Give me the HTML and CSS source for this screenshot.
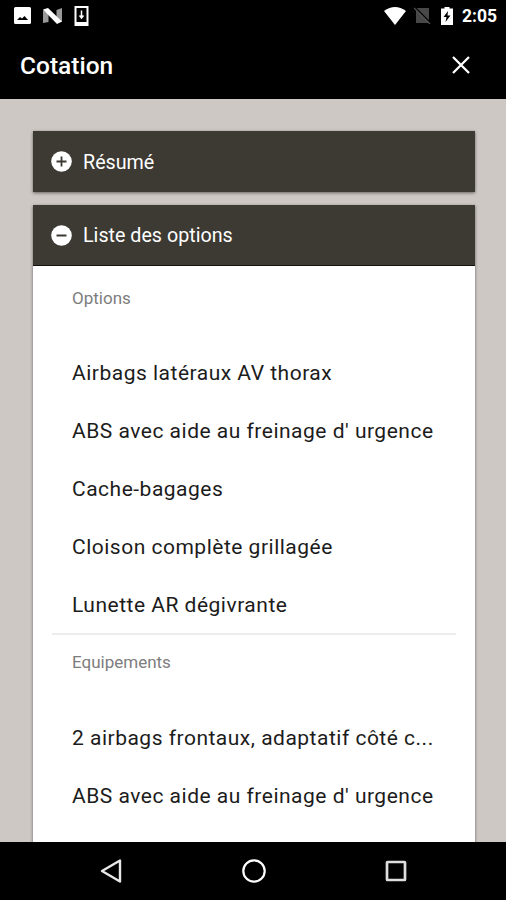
FILE: index.html
```html
<!DOCTYPE html>
<html lang="fr">
<head>
    <meta charset="UTF-8">
    <meta name="viewport" content="width=device-width, initial-scale=1.0">
    <title>Cotation</title>
    <link rel="stylesheet" href="styles.css">
</head>
<body>
    <div class="status-bar">
        <div class="status-left">
            <svg width="17" height="17" viewBox="0 0 17 17">
                <rect width="17" height="17" rx="1.5" fill="#fff"/>
                <path d="M3 13l3-3 2 1.500 2.500-2.500 3.500 4z" fill="#000"/>
            </svg>
            <svg width="19" height="16" viewBox="0 0 19 16">
                <path d="M0 2l5.500 3v9L0 15zM19 0v14l-5.500-3V2z" fill="#999"/>
                <path d="M0 1.500L5 0l14 13.500L14 16z" fill="#fff"/>
            </svg>
            <svg width="15" height="20" viewBox="0 0 15 20">
                <path d="M1.500 1h12v18h-12z" fill="none" stroke="#fff" stroke-width="2"/>
                <path d="M1 17.500h13" stroke="#fff" stroke-width="3"/>
                <path d="M7.500 4.500v7M5.500 9.500l2 2.500 2-2.500" fill="none" stroke="#fff" stroke-width="1.500"/>
            </svg>
        </div>
        <div class="status-right">
            <svg class="wifi" width="22" height="18" viewBox="0 0 22 18">
                <path d="M0 4Q11-4 22 4L11 18z" fill="#fff"/>
            </svg>
            <svg class="signal" width="17" height="17" viewBox="0 0 17 17">
                <path d="M2 1h13v15H2z" fill="#484848"/>
                <path d="M1 .5L17 16.500" stroke="#000" stroke-width="1.600"/>
                <path d="M0 1L16 17" stroke="#555" stroke-width="1.200"/>
            </svg>
            <svg class="battery" width="12" height="18" viewBox="0 0 12 18">
                <path d="M0 1.500h3.500V0h5v1.500H12V18H0z" fill="#fff"/>
                <path d="M7 4L2.500 10H5.500L4.500 15 9.500 8.500H6.500z" fill="#000"/>
            </svg>
            <span class="clock">2:05</span>
        </div>
    </div>

    <header>
        <h1>Cotation</h1>
        <svg class="close" width="18" height="18" viewBox="0 0 18 18">
            <path d="M1 1l16 16M17 1L1 17" stroke="#fff" stroke-width="2.300"/>
        </svg>
    </header>

    <main>
        <div class="card">
            <div class="card-header">
                <svg width="21" height="21" viewBox="0 0 21 21">
                    <circle cx="10.500" cy="10.500" r="10.300" fill="#fff"/>
                    <path d="M5.500 10.500h10M10.500 5.500v10" stroke="#3d3933" stroke-width="1.800"/>
                </svg>
                <span>Résumé</span>
            </div>
        </div>

        <div class="card open">
            <div class="card-header">
                <svg width="21" height="21" viewBox="0 0 21 21">
                    <circle cx="10.500" cy="10.500" r="10.300" fill="#fff"/>
                    <path d="M5.500 10.500h10" stroke="#3d3933" stroke-width="2"/>
                </svg>
                <span>Liste des options</span>
            </div>
            <div class="card-body">
                <h3>Options</h3>
                <ul>
                    <li>Airbags latéraux AV thorax</li>
                    <li>ABS avec aide au freinage d' urgence</li>
                    <li>Cache-bagages</li>
                    <li>Cloison complète grillagée</li>
                    <li>Lunette AR dégivrante</li>
                </ul>
                <h3 class="divided">Equipements</h3>
                <ul>
                    <li>2 airbags frontaux, adaptatif côté c...</li>
                    <li>ABS avec aide au freinage d' urgence</li>
                </ul>
            </div>
        </div>
    </main>

    <nav>
        <svg width="24" height="26" viewBox="0 0 24 26">
            <path d="M21 2.500v21L3 13z" fill="none" stroke="#e8e8e8" stroke-width="2.400" stroke-linejoin="round"/>
        </svg>
        <svg width="24" height="24" viewBox="0 0 24 24">
            <circle cx="12" cy="12" r="10.700" fill="none" stroke="#fff" stroke-width="2.200"/>
        </svg>
        <svg width="22" height="22" viewBox="0 0 22 22">
            <rect x="2" y="2" width="18" height="18" rx=".5" fill="none" stroke="#ddd" stroke-width="2.700"/>
        </svg>
    </nav>
</body>
</html>
```
FILE: styles.css
```css
* {
    box-sizing: border-box;
}

body {
    margin: 0;
    height: 900px;
    display: flex;
    flex-direction: column;
    overflow: hidden;
    background-color: #cec8c4;
    font-family: Roboto, sans-serif;
}

.status-bar {
    display: flex;
    justify-content: space-between;
    flex: none;
    height: 31px;
    padding: 0 9px 0 14px;
    background-color: #000;
}

.status-left,
.status-right {
    display: flex;
    align-items: center;
}

.status-left {
    gap: 12px;
}

.wifi {
    margin-right: 8px;
}

.signal {
    margin-right: 10px;
}

.battery {
    margin-right: 9px;
}

.clock {
    color: #fff;
    font-size: 17.5px;
    font-weight: 700;
}

header {
    display: flex;
    flex: none;
    justify-content: space-between;
    align-items: center;
    height: 68px;
    padding: 0 36px 0 20px;
    background-color: #000;
    color: #fff;
}

h1 {
    margin: 0;
    font-size: 24.5px;
    font-weight: 500;
}

main {
    flex: 1;
    min-height: 0;
    padding: 32px 31px 0 33px;
    overflow: hidden;
}

.card {
    margin-bottom: 13px;
    background-color: #fff;
    box-shadow: 0 1px 3px rgba(0, 0, 0, 0.5);
}

.card-header {
    display: flex;
    align-items: center;
    gap: 11px;
    height: 61px;
    padding-left: 18px;
    background-color: #3d3933;
    color: #fff;
    font-size: 19.7px;
}

.card-header span {
    padding-top: 1px;
}

.open .card-header {
    border-bottom: 1px solid #15120e;
}

.card-body {
    height: 640px;
    padding: 4px 19px 0;
}

h3 {
    height: 74px;
    margin: 0;
    padding: 16px 0 0 20px;
    color: #7d7d7d;
    font-size: 17px;
    font-weight: 400;
    line-height: 24px;
}

.divided {
    height: 76px;
    margin-top: -1px;
    padding-top: 15px;
    border-top: 2px solid #ececec;
}

ul {
    margin: 0;
    padding: 0 0 0 20px;
    list-style: none;
}

li {
    height: 58px;
    color: #1c1c1c;
    font-size: 21px;
    line-height: 58px;
    letter-spacing: 0.5px;
    white-space: nowrap;
}

nav {
    display: flex;
    flex: none;
    justify-content: space-between;
    align-items: center;
    height: 58px;
    padding: 0 99px;
    background-color: #000;
}
```
